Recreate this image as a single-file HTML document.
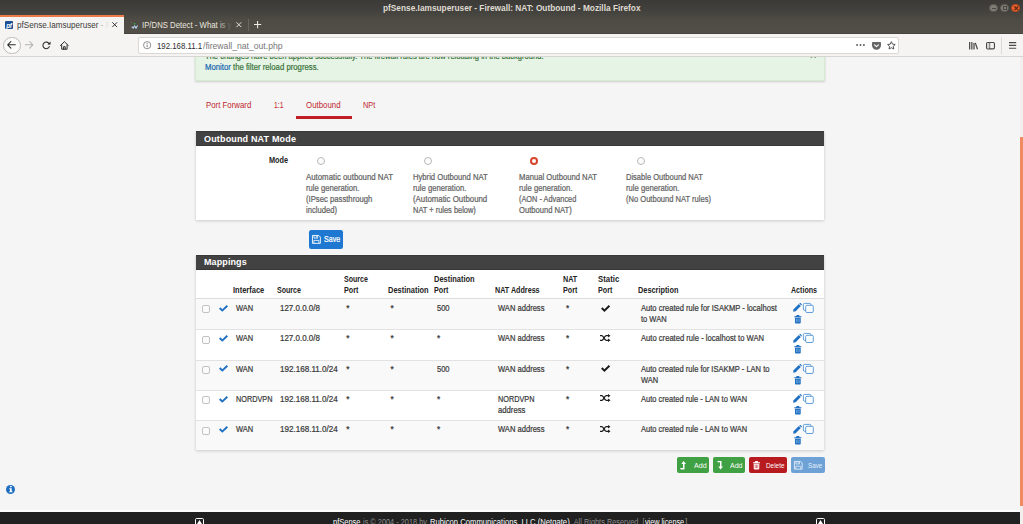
<!DOCTYPE html>
<html><head><meta charset="utf-8"><title>pfSense.Iamsuperuser - Firewall: NAT: Outbound</title>
<style>
*{box-sizing:border-box;margin:0;padding:0}
html,body{width:1023px;height:524px;overflow:hidden;background:#f5f5f5;font-family:"Liberation Sans",sans-serif}
body{position:relative}
.a,.t,svg{position:absolute}
.t{white-space:nowrap;line-height:12px;transform-origin:0 0}
svg{overflow:visible}
.phead{background:#424242;left:196px;width:628px;height:15px;border-top:1px solid #373737;border-bottom:1px solid #373737;box-shadow:0 -1px 0 rgba(255,255,255,.75)}
.panel{left:196px;width:628px;background:#fff;box-shadow:0 1px 3px rgba(0,0,0,.17),0 0 1px rgba(0,0,0,.08)}
.radio{width:8.2px;height:8.2px;border:1px solid #b9b9b9;border-radius:50%;background:#fbfbfb;top:157.3px}
.cb{width:8px;height:8px;border:1px solid #c2c2c2;border-radius:2px;background:#fbfbfb;left:201.8px}
.rl{left:196px;width:628px;height:1px;background:#e2e2e2}
.btn{height:16.6px;border-radius:2px;top:456.7px}
</style></head><body>
<!-- title bar -->
<div class="a" style="left:0;top:0;width:1023px;height:34px;background:linear-gradient(#3b3a36 0,#42403c 28%,#4d4b44 58%,#524f48 96%,#403e3a 100%)"></div>
<div class="a" style="left:989.4px;top:3.6px;width:8.7px;height:8.7px;border-radius:50%;background:#7f7c75;border:.6px solid #5e5b55"></div>
<div class="a" style="left:991.6px;top:7.6px;width:4.3px;height:1px;background:#4a4843"></div>
<div class="a" style="left:1000.4px;top:3.6px;width:8.7px;height:8.7px;border-radius:50%;background:#7f7c75;border:.6px solid #5e5b55"></div>
<div class="a" style="left:1002.7px;top:5.9px;width:4.2px;height:4.2px;border:.9px solid #4a4843"></div>
<div class="a" style="left:1011.4px;top:3.5px;width:8.9px;height:8.9px;border-radius:50%;background:#ea5f2b;border:.6px solid #b6491f"></div>
<svg style="left:1013.6px;top:5.7px" width="4.5" height="4.5" viewBox="0 0 4.5 4.5"><path d="M.4.4l3.7 3.7M4.1.4L.4 4.1" stroke="#4a2413" stroke-width="1.1"/></svg>
<!-- tabs -->
<div class="a" style="left:0;top:15.2px;width:124px;height:19px;background:#f5f4f2"></div>
<div class="a" style="left:0;top:15.2px;width:124px;height:1.4px;background:#eb7b4b"></div>
<div class="a" style="left:5.2px;top:21px;width:8.2px;height:8px;background:#1d4f96;border-radius:1px"></div>
<div class="t" style="left:6.2px;top:19.6px;font-size:6.4px;font-weight:bold;font-style:italic;color:#fff;letter-spacing:-.3px">pf</div>
<svg style="left:112px;top:22.2px" width="5.4" height="5.4" viewBox="0 0 5.4 5.4"><path d="M.3.3l4.8 4.8M5.1.3L.3 5.1" stroke="#2a2a2a" stroke-width=".95"/></svg>
<svg style="left:130.5px;top:22.3px" width="7.2" height="6.8" viewBox="0 0 7.2 6.8"><path d="M2.3 1.2h2.6L3.6 3z" fill="#35b04a"/><path d="M.7 4.6l1.4 1.6 1.5-2.3 1.4 2.2 1.6-2.6" fill="none" stroke="#b9d7f0" stroke-width="1.1"/><circle cx=".6" cy=".5" r=".35" fill="#ddd"/></svg>
<svg style="left:236px;top:22.2px" width="5.8" height="5.4" viewBox="0 0 5.8 5.4"><path d="M.5.3l4.8 4.8M5.3.3L.5 5.1" stroke="#ebe8e1" stroke-width=".95"/></svg>
<div class="a" style="left:247.8px;top:18.5px;width:1px;height:12.3px;background:#6a675f"></div>
<svg style="left:253.7px;top:20.8px" width="7.2" height="7.2" viewBox="0 0 7.2 7.2"><path d="M3.6 0v7.2M0 3.6h7.2" stroke="#efece6" stroke-width="1.05"/></svg>
<!-- tab text fades -->
<div class="a" style="left:97px;top:18px;width:14px;height:13px;background:linear-gradient(90deg,rgba(245,244,242,0),rgba(245,244,242,.75) 45%,#f5f4f2 95%);z-index:3"></div>
<div class="a" style="left:217px;top:18px;width:17px;height:13px;background:linear-gradient(90deg,rgba(75,73,67,0),#4d4b44 90%);z-index:3"></div>
<!-- toolbar -->
<div class="a" style="left:0;top:33.6px;width:1023px;height:23.7px;background:#f5f4f2;border-bottom:1px solid #d6d5d2;z-index:2"></div>
<div class="a" style="left:138.4px;top:36.8px;width:761px;height:17.6px;background:#fff;border:.8px solid #d9d8d5;border-radius:2px;z-index:2"></div>
<div class="a" style="left:3px;top:36.5px;width:17.6px;height:17.6px;border-radius:50%;background:#fbfbfa;border:.8px solid #bdbbb6;z-index:2"></div>
<svg style="left:7.4px;top:41.4px;z-index:2" width="8.6" height="7.6" viewBox="0 0 8.6 7.6"><path d="M3.9.5L.7 3.8l3.2 3.3M.9 3.8h7.4" fill="none" stroke="#2b2b2b" stroke-width="1.05" stroke-linecap="round" stroke-linejoin="round"/></svg>
<svg style="left:25px;top:41.4px;z-index:2" width="8.6" height="7.6" viewBox="0 0 8.6 7.6"><path d="M4.7.5l3.2 3.3-3.2 3.3M7.7 3.8H.3" fill="none" stroke="#b4b3b0" stroke-width="1.05" stroke-linecap="round" stroke-linejoin="round"/></svg>
<svg style="left:42.3px;top:41.2px;z-index:2" width="9.6" height="8.2" viewBox="0 0 9.6 8.2"><path d="M7.2 2.9A3.3 3.3 0 1 0 7.3 5.6" fill="none" stroke="#2b2b2b" stroke-width="1.05" stroke-linecap="round"/><path d="M8.6.6v3h-3z" fill="#2b2b2b"/></svg>
<svg style="left:60.1px;top:41.1px;z-index:2" width="8.8" height="8.8" viewBox="0 0 8.8 8.8"><path d="M.5 4.5L4.4.7l3.9 3.8M1.7 4.2v4h5.4v-4M3.6 8.2V5.7h1.6v2.5" fill="none" stroke="#2b2b2b" stroke-width="1" stroke-linecap="round" stroke-linejoin="round"/></svg>
<svg style="left:143.1px;top:41.2px;z-index:2" width="8.3" height="8.3" viewBox="0 0 7 7"><circle cx="3.5" cy="3.5" r="3.05" fill="none" stroke="#7a7a7a" stroke-width=".7"/><path d="M3.5 3.1v2.1" stroke="#7a7a7a" stroke-width=".8"/><circle cx="3.5" cy="2" r=".5" fill="#7a7a7a"/></svg>
<svg style="left:856px;top:44.2px;z-index:2" width="9" height="2" viewBox="0 0 9 2"><circle cx="1.1" cy="1" r=".95" fill="#5b5b5b"/><circle cx="4.5" cy="1" r=".95" fill="#5b5b5b"/><circle cx="7.9" cy="1" r=".95" fill="#5b5b5b"/></svg>
<svg style="left:871.8px;top:41.5px;z-index:2" width="9" height="7.8" viewBox="0 0 9 7.8"><path d="M.9 0h7.2q.9 0 .9.9v2.4a4.5 4.5 0 0 1-9 0V.9Q0 0 .9 0z" fill="#666"/><path d="M2.5 2.8l2 1.9 2-1.9" fill="none" stroke="#fff" stroke-width="1.1" stroke-linecap="round" stroke-linejoin="round"/></svg>
<svg style="left:887.3px;top:41px;z-index:2" width="8.8" height="8.6" viewBox="0 0 8.8 8.6"><path d="M4.4.7l1.15 2.45 2.65.35-1.95 1.85.5 2.65L4.4 6.7 2.05 8l.5-2.65L.6 3.5l2.65-.35z" fill="none" stroke="#4a4a4a" stroke-width=".95" stroke-linejoin="round"/></svg>
<svg style="left:969px;top:41.5px;z-index:2" width="9" height="7.4" viewBox="0 0 9 7.4"><path d="M.65 0v7.4M2.85 0v7.4M5 1v6.4M6.3.9l2.2 6.3" fill="none" stroke="#4a4a4a" stroke-width="1.25"/></svg>
<svg style="left:986.3px;top:41.5px;z-index:2" width="9" height="7.4" viewBox="0 0 9 7.4"><rect x=".55" y=".55" width="7.9" height="6.3" rx="1.1" fill="none" stroke="#4a4a4a" stroke-width="1.15"/><path d="M3.7.5v6.4" stroke="#4a4a4a" stroke-width="1"/><rect x="1.1" y="1.1" width="2.2" height="5.2" fill="#d2d2d2"/></svg>
<div class="a" style="left:1001.2px;top:36.7px;width:1px;height:17px;background:#dcdad6;z-index:2"></div>
<svg style="left:1009px;top:42px;z-index:2" width="7.2" height="6.8" viewBox="0 0 7.2 6.8"><path d="M0 .6h7.2M0 3.4h7.2M0 6.2h7.2" stroke="#4a4a4a" stroke-width="1.1"/></svg>
<!-- alert -->
<div class="a" style="left:195.4px;top:40px;width:629.2px;height:40.8px;background:#e6f4e5;border:.6px solid #d5ead0;box-shadow:0 1px 2px rgba(0,0,0,.16)"></div>
<div class="t" style="left:810px;top:48.7px;font-size:11px;color:#5f7f60;font-weight:bold;z-index:1">×</div>
<!-- nav tabs -->
<div class="a" style="left:295.8px;top:116.3px;width:56px;height:3px;background:#bf1e25"></div>
<!-- panel 1 -->
<div class="a panel" style="top:131px;height:89.3px"></div>
<div class="a phead" style="top:131px"></div>
<div class="a radio" style="left:317.3px"></div>
<div class="a radio" style="left:423.7px"></div>
<div class="a radio" style="left:530.3px;border:2.9px solid #d8442c;background:#fff"></div>
<div class="a radio" style="left:636.8px"></div>
<div class="a" style="left:308.8px;top:230.2px;width:34px;height:18.8px;background:#1e77d0;border-radius:2.2px"></div>
<svg style="left:311.5px;top:235px" width="8.8" height="8.8" viewBox="0 0 8.8 8.8"><path d="M.45.45h6.3l1.6 1.6v6.3H.45z" fill="none" stroke="#fff" stroke-width=".9" stroke-linejoin="round"/><path d="M2 .6v2.5h3.6V.6M4.3 1v1.5" fill="none" stroke="#fff" stroke-width=".8"/><path d="M1.9 8.2V5.4h5v2.8" fill="none" stroke="#fff" stroke-width=".8"/></svg>
<!-- panel 2 -->
<div class="a panel" style="top:255.3px;height:195.2px"></div>
<div class="a phead" style="top:255.3px;height:14.6px"></div>
<div class="a" style="left:196px;top:297.6px;width:628px;height:1.4px;background:#dcdcdc"></div>
<div class="a" style="left:196px;top:299.0px;width:628px;height:30.3px;background:#f9f9f9"></div>
<div class="a cb" style="top:305.3px"></div>
<svg style="left:218.6px;top:304.8px" width="9" height="6.9" viewBox="0 0 9.2 7"><path d="M0 3.8L1.4 2.4l2 2L7.8 0l1.4 1.4L3.4 7z" fill="#1f6fc2"/></svg>
<svg style="left:601px;top:304.5px" width="9.2" height="6.9" viewBox="0 0 9.2 7"><path d="M0 3.8L1.4 2.4l2 2L7.8 0l1.4 1.4L3.4 7z" fill="#1c1c1c"/></svg>
<svg style="left:793px;top:303.4px" width="8.9" height="8.7" viewBox="0 0 9 9"><path d="M0 9l.5-2.6L5.9 1 8 3.100 2.600 8.500z" fill="#1f6fc2"/><path d="M6.500.400l.4-.3q.4-.3.800 0l1.200 1.200q.300.400 0 .800l-.4.400z" fill="#1f6fc2"/></svg>
<svg style="left:803.2px;top:303.0px" width="10.7" height="9.9" viewBox="0 0 10.7 9.900"><rect x=".4" y=".4" width="7.500" height="6.900" rx="1.200" fill="#fbfdff" stroke="#3b86d0" stroke-width=".8"/><rect x="2.700" y="2.300" width="7.600" height="7.200" rx="1.200" fill="#fbfdff" stroke="#3b86d0" stroke-width=".8"/></svg>
<svg style="left:793.6px;top:315.0px" width="7.700" height="8.600" viewBox="0 0 7 8.400"><path d="M0 1.200h7v1H0zM2.300 0h2.400l.5 1.200H1.800zM.7 2.700h5.600v4.900q0 .8-.8.800h-4q-.8 0-.8-.8z" fill="#1f6fc2"/><path d="M2.200 3.600v3.400M3.500 3.600v3.400M4.800 3.600v3.400" stroke="#9cc3ea" stroke-width=".5"/></svg>
<div class="a rl" style="top:329.2px"></div>
<div class="a cb" style="top:335.6px"></div>
<svg style="left:218.6px;top:335.1px" width="9" height="6.9" viewBox="0 0 9.2 7"><path d="M0 3.8L1.4 2.4l2 2L7.8 0l1.4 1.4L3.4 7z" fill="#1f6fc2"/></svg>
<svg style="left:600.3px;top:333.7px" width="10.5" height="8" viewBox="0 0 10.5 8"><path d="M0 1.7h1.9c1.7 0 2.4 4.6 4.3 4.6h2M0 6.3h1.9c1.7 0 2.4-4.6 4.3-4.6h2" fill="none" stroke="#1c1c1c" stroke-width="1.3"/><path d="M8 0l2.5 1.7L8 3.4zM8 4.6l2.5 1.7L8 8z" fill="#1c1c1c"/></svg>
<svg style="left:793px;top:333.7px" width="8.9" height="8.7" viewBox="0 0 9 9"><path d="M0 9l.5-2.6L5.9 1 8 3.100 2.600 8.500z" fill="#1f6fc2"/><path d="M6.500.400l.4-.3q.4-.3.800 0l1.200 1.200q.300.400 0 .800l-.4.400z" fill="#1f6fc2"/></svg>
<svg style="left:803.2px;top:333.3px" width="10.7" height="9.9" viewBox="0 0 10.7 9.900"><rect x=".4" y=".4" width="7.500" height="6.900" rx="1.200" fill="#fbfdff" stroke="#3b86d0" stroke-width=".8"/><rect x="2.700" y="2.300" width="7.600" height="7.200" rx="1.200" fill="#fbfdff" stroke="#3b86d0" stroke-width=".8"/></svg>
<svg style="left:793.6px;top:345.3px" width="7.700" height="8.600" viewBox="0 0 7 8.400"><path d="M0 1.200h7v1H0zM2.300 0h2.400l.5 1.200H1.800zM.7 2.700h5.600v4.900q0 .8-.8.800h-4q-.8 0-.8-.8z" fill="#1f6fc2"/><path d="M2.200 3.600v3.400M3.500 3.600v3.400M4.800 3.600v3.400" stroke="#9cc3ea" stroke-width=".5"/></svg>
<div class="a" style="left:196px;top:359.6px;width:628px;height:30.3px;background:#f9f9f9"></div>
<div class="a rl" style="top:359.5px"></div>
<div class="a cb" style="top:365.9px"></div>
<svg style="left:218.6px;top:365.4px" width="9" height="6.9" viewBox="0 0 9.2 7"><path d="M0 3.8L1.4 2.4l2 2L7.8 0l1.4 1.4L3.4 7z" fill="#1f6fc2"/></svg>
<svg style="left:601px;top:365.1px" width="9.2" height="6.9" viewBox="0 0 9.2 7"><path d="M0 3.8L1.4 2.4l2 2L7.8 0l1.4 1.4L3.4 7z" fill="#1c1c1c"/></svg>
<svg style="left:793px;top:364.0px" width="8.9" height="8.7" viewBox="0 0 9 9"><path d="M0 9l.5-2.6L5.9 1 8 3.100 2.600 8.500z" fill="#1f6fc2"/><path d="M6.500.400l.4-.3q.4-.3.800 0l1.200 1.200q.300.400 0 .800l-.4.400z" fill="#1f6fc2"/></svg>
<svg style="left:803.2px;top:363.6px" width="10.7" height="9.9" viewBox="0 0 10.7 9.900"><rect x=".4" y=".4" width="7.500" height="6.900" rx="1.200" fill="#fbfdff" stroke="#3b86d0" stroke-width=".8"/><rect x="2.700" y="2.300" width="7.600" height="7.200" rx="1.200" fill="#fbfdff" stroke="#3b86d0" stroke-width=".8"/></svg>
<svg style="left:793.6px;top:375.6px" width="7.700" height="8.600" viewBox="0 0 7 8.400"><path d="M0 1.200h7v1H0zM2.300 0h2.400l.5 1.200H1.800zM.7 2.700h5.600v4.900q0 .8-.8.800h-4q-.8 0-.8-.8z" fill="#1f6fc2"/><path d="M2.200 3.600v3.400M3.500 3.600v3.400M4.800 3.600v3.400" stroke="#9cc3ea" stroke-width=".5"/></svg>
<div class="a rl" style="top:389.8px"></div>
<div class="a cb" style="top:396.2px"></div>
<svg style="left:218.6px;top:395.7px" width="9" height="6.9" viewBox="0 0 9.2 7"><path d="M0 3.8L1.4 2.4l2 2L7.8 0l1.4 1.4L3.4 7z" fill="#1f6fc2"/></svg>
<svg style="left:600.3px;top:394.3px" width="10.5" height="8" viewBox="0 0 10.5 8"><path d="M0 1.7h1.9c1.7 0 2.4 4.6 4.3 4.6h2M0 6.3h1.9c1.7 0 2.4-4.6 4.3-4.6h2" fill="none" stroke="#1c1c1c" stroke-width="1.3"/><path d="M8 0l2.5 1.7L8 3.4zM8 4.6l2.5 1.7L8 8z" fill="#1c1c1c"/></svg>
<svg style="left:793px;top:394.3px" width="8.9" height="8.7" viewBox="0 0 9 9"><path d="M0 9l.5-2.6L5.9 1 8 3.100 2.600 8.500z" fill="#1f6fc2"/><path d="M6.500.400l.4-.3q.4-.3.800 0l1.200 1.200q.300.400 0 .800l-.4.400z" fill="#1f6fc2"/></svg>
<svg style="left:803.2px;top:393.9px" width="10.7" height="9.9" viewBox="0 0 10.7 9.900"><rect x=".4" y=".4" width="7.500" height="6.900" rx="1.200" fill="#fbfdff" stroke="#3b86d0" stroke-width=".8"/><rect x="2.700" y="2.300" width="7.600" height="7.200" rx="1.200" fill="#fbfdff" stroke="#3b86d0" stroke-width=".8"/></svg>
<svg style="left:793.6px;top:405.9px" width="7.700" height="8.600" viewBox="0 0 7 8.400"><path d="M0 1.200h7v1H0zM2.300 0h2.400l.5 1.200H1.800zM.7 2.700h5.600v4.900q0 .8-.8.800h-4q-.8 0-.8-.8z" fill="#1f6fc2"/><path d="M2.200 3.600v3.400M3.500 3.600v3.400M4.800 3.600v3.400" stroke="#9cc3ea" stroke-width=".5"/></svg>
<div class="a" style="left:196px;top:420.2px;width:628px;height:30.3px;background:#f9f9f9"></div>
<div class="a rl" style="top:420.1px"></div>
<div class="a cb" style="top:426.5px"></div>
<svg style="left:218.6px;top:426.0px" width="9" height="6.9" viewBox="0 0 9.2 7"><path d="M0 3.8L1.4 2.4l2 2L7.8 0l1.4 1.4L3.4 7z" fill="#1f6fc2"/></svg>
<svg style="left:600.3px;top:424.6px" width="10.5" height="8" viewBox="0 0 10.5 8"><path d="M0 1.7h1.9c1.7 0 2.4 4.6 4.3 4.6h2M0 6.3h1.9c1.7 0 2.4-4.6 4.3-4.6h2" fill="none" stroke="#1c1c1c" stroke-width="1.3"/><path d="M8 0l2.5 1.7L8 3.4zM8 4.6l2.5 1.7L8 8z" fill="#1c1c1c"/></svg>
<svg style="left:793px;top:424.6px" width="8.9" height="8.7" viewBox="0 0 9 9"><path d="M0 9l.5-2.6L5.9 1 8 3.100 2.600 8.500z" fill="#1f6fc2"/><path d="M6.500.400l.4-.3q.4-.3.800 0l1.200 1.200q.300.400 0 .800l-.4.400z" fill="#1f6fc2"/></svg>
<svg style="left:803.2px;top:424.2px" width="10.7" height="9.9" viewBox="0 0 10.7 9.900"><rect x=".4" y=".4" width="7.500" height="6.900" rx="1.200" fill="#fbfdff" stroke="#3b86d0" stroke-width=".8"/><rect x="2.700" y="2.300" width="7.600" height="7.200" rx="1.200" fill="#fbfdff" stroke="#3b86d0" stroke-width=".8"/></svg>
<svg style="left:793.6px;top:436.2px" width="7.700" height="8.600" viewBox="0 0 7 8.400"><path d="M0 1.200h7v1H0zM2.300 0h2.400l.5 1.200H1.800zM.7 2.700h5.600v4.900q0 .8-.8.800h-4q-.8 0-.8-.8z" fill="#1f6fc2"/><path d="M2.200 3.600v3.400M3.500 3.600v3.400M4.800 3.600v3.400" stroke="#9cc3ea" stroke-width=".5"/></svg>
<!-- buttons -->
<div class="a btn" style="left:677.4px;width:31.4px;background:#40a044"></div>
<div class="a btn" style="left:713.3px;width:31.5px;background:#40a044"></div>
<div class="a btn" style="left:749.3px;width:37.6px;background:#b71b1f"></div>
<div class="a btn" style="left:791.3px;width:33.6px;background:#6ea2d6"></div>
<svg style="left:680.2px;top:461px" width="6" height="8.4" viewBox="0 0 6 8.4"><path d="M3.6 0L6 3H4.5v5.4H.9L0 7.1h3V3H1.3z" fill="#fff"/></svg>
<svg style="left:716.5px;top:461px" width="6" height="8.4" viewBox="0 0 6 8.4"><path d="M3.6 8.4L6 5.4H4.5V0H.9L0 1.3h3v4.1H1.3z" fill="#fff"/></svg>
<svg style="left:752.5px;top:461px" width="7" height="8.4" viewBox="0 0 7 8.4"><path d="M0 1.2h7v1H0zM2.3 0h2.4l.5 1.2H1.8zM.7 2.7h5.6v4.9q0 .8-.8.8h-4q-.8 0-.8-.8z" fill="#fff"/><path d="M2.2 3.6v3.6M3.5 3.6v3.6M4.8 3.6v3.6" stroke="#b71b1f" stroke-width=".55"/></svg>
<svg style="left:794.4px;top:461px" width="8.6" height="8.6" viewBox="0 0 8.8 8.8"><path d="M.45.45h6.3l1.6 1.6v6.3H.45z" fill="none" stroke="#e4eef8" stroke-width=".9" stroke-linejoin="round"/><path d="M2 .6v2.5h3.6V.6M4.3 1v1.5" fill="none" stroke="#e4eef8" stroke-width=".8"/><path d="M1.9 8.2V5.4h5v2.8" fill="none" stroke="#e4eef8" stroke-width=".8"/></svg>
<!-- info icon -->
<div class="a" style="left:5.55px;top:484.5px;width:9.9px;height:9.9px;border-radius:50%;background:#1f6fc0"></div>
<svg style="left:8.7px;top:486.2px" width="3.6" height="6.4" viewBox="0 0 3.6 6.4"><path d="M1 0h1.7v1.3H1zM.3 2.3h2.4v3h.7v1H.2v-1h.8V3.3H.3z" fill="#fff"/></svg>
<!-- footer -->
<div class="a" style="left:0;top:509.6px;width:1020px;height:2.6px;background:#fdfdfd"></div>
<div class="a" style="left:0;top:512px;width:1020px;height:12px;background:#212121"></div>
<div class="a" style="left:195.3px;top:518px;width:9px;height:9px;border:1.1px solid #fff;border-radius:1.6px"></div>
<svg style="left:197.3px;top:520.1px" width="5" height="3.9" viewBox="0 0 4.4 3.4"><path d="M2.2 0l2.2 3.4H0z" fill="#fff"/></svg>
<div class="a" style="left:816.3px;top:518px;width:9px;height:9px;border:1.1px solid #fff;border-radius:1.6px"></div>
<svg style="left:818.3px;top:520.1px" width="5" height="3.9" viewBox="0 0 4.4 3.4"><path d="M2.2 0l2.2 3.4H0z" fill="#fff"/></svg>
<!-- scrollbar -->
<div class="a" style="left:1019.8px;top:57px;width:3.2px;height:467px;background:#f1f0ef"></div>
<div class="a" style="left:1020.3px;top:137.2px;width:2.7px;height:368.8px;background:#f08a60"></div>
<div class="t" style="left:383.00px;top:2.12px;font-size:8.3px;color:#dfdbd2;font-weight:bold;">pfSense.Iamsuperuser - Firewall: NAT: Outbound - Mozilla Firefox</div>
<div class="t" style="left:17.10px;top:18.82px;font-size:8.6px;color:#3a3a3a;transform:scaleX(0.9434);">pfSense.Iamsuperuser - F</div>
<div class="t" style="left:141.50px;top:18.72px;font-size:8.6px;color:#e9e6df;transform:scaleX(0.9061);">IP/DNS Detect - What is y</div>
<div class="t" style="left:157.30px;top:39.62px;font-size:8.9px;color:#2e2e2e;transform:scaleX(0.8824);z-index:4;">192.168.11.1</div>
<div class="t" style="left:203.20px;top:39.62px;font-size:8.9px;color:#777;transform:scaleX(0.9711);z-index:4;">/firewall_nat_out.php</div>
<div class="t" style="left:204.60px;top:49.72px;font-size:8.3px;color:#3c763d;transform:scaleX(0.9137);-webkit-text-stroke:.22px;z-index:1;">The changes have been applied successfully. The firewall rules are now reloading in the background.</div>
<div class="t" style="left:204.60px;top:60.52px;font-size:8.3px;color:#3c763d;transform:scaleX(0.9338);-webkit-text-stroke:.22px;"><span style="color:#2068b4">Monitor</span> the filter reload progress.</div>
<div class="t" style="left:205.50px;top:99.35px;font-size:8.8px;color:#c0272d;transform:scaleX(0.8911);">Port Forward</div>
<div class="t" style="left:273.90px;top:99.35px;font-size:8.8px;color:#c0272d;transform:scaleX(0.7782);">1:1</div>
<div class="t" style="left:306.30px;top:99.35px;font-size:8.8px;color:#c0272d;transform:scaleX(0.8955);">Outbound</div>
<div class="t" style="left:363.30px;top:99.35px;font-size:8.8px;color:#c0272d;transform:scaleX(0.8344);">NPt</div>
<div class="t" style="left:204.20px;top:132.80px;font-size:9.8px;color:#fff;font-weight:bold;transform:scaleX(0.9200);letter-spacing:0.167px;">Outbound NAT Mode</div>
<div class="t" style="left:269.10px;top:154.12px;font-size:8.3px;color:#222;font-weight:bold;transform:scaleX(0.8799);">Mode</div>
<div class="t" style="left:306.10px;top:170.52px;font-size:8.3px;color:#636363;transform:scaleX(0.9444);-webkit-text-stroke:.22px;">Automatic outbound NAT</div>
<div class="t" style="left:306.10px;top:181.62px;font-size:8.3px;color:#636363;transform:scaleX(0.9259);-webkit-text-stroke:.22px;">rule generation.</div>
<div class="t" style="left:306.10px;top:192.72px;font-size:8.3px;color:#636363;transform:scaleX(0.9281);-webkit-text-stroke:.22px;">(IPsec passthrough</div>
<div class="t" style="left:306.10px;top:203.82px;font-size:8.3px;color:#636363;transform:scaleX(0.9202);-webkit-text-stroke:.22px;">included)</div>
<div class="t" style="left:412.50px;top:170.52px;font-size:8.3px;color:#636363;transform:scaleX(0.9217);-webkit-text-stroke:.22px;">Hybrid Outbound NAT</div>
<div class="t" style="left:412.50px;top:181.62px;font-size:8.3px;color:#636363;transform:scaleX(0.9259);-webkit-text-stroke:.22px;">rule generation.</div>
<div class="t" style="left:412.50px;top:192.72px;font-size:8.3px;color:#636363;transform:scaleX(0.9468);-webkit-text-stroke:.22px;">(Automatic Outbound</div>
<div class="t" style="left:412.50px;top:203.82px;font-size:8.3px;color:#636363;transform:scaleX(0.8977);-webkit-text-stroke:.22px;">NAT + rules below)</div>
<div class="t" style="left:519.00px;top:170.52px;font-size:8.3px;color:#636363;transform:scaleX(0.9242);-webkit-text-stroke:.22px;">Manual Outbound NAT</div>
<div class="t" style="left:519.00px;top:181.62px;font-size:8.3px;color:#636363;transform:scaleX(0.9259);-webkit-text-stroke:.22px;">rule generation.</div>
<div class="t" style="left:519.00px;top:192.72px;font-size:8.3px;color:#636363;transform:scaleX(0.8868);-webkit-text-stroke:.22px;">(AON - Advanced</div>
<div class="t" style="left:519.00px;top:203.82px;font-size:8.3px;color:#636363;transform:scaleX(0.9181);-webkit-text-stroke:.22px;">Outbound NAT)</div>
<div class="t" style="left:625.70px;top:170.52px;font-size:8.3px;color:#636363;transform:scaleX(0.9074);-webkit-text-stroke:.22px;">Disable Outbound NAT</div>
<div class="t" style="left:625.70px;top:181.62px;font-size:8.3px;color:#636363;transform:scaleX(0.9259);-webkit-text-stroke:.22px;">rule generation.</div>
<div class="t" style="left:625.70px;top:192.72px;font-size:8.3px;color:#636363;transform:scaleX(0.9104);-webkit-text-stroke:.22px;">(No Outbound NAT rules)</div>
<div class="t" style="left:323.90px;top:233.12px;font-size:8.3px;color:#fff;transform:scaleX(0.8499);-webkit-text-stroke:.22px;">Save</div>
<div class="t" style="left:204.40px;top:256.10px;font-size:9.8px;color:#fff;font-weight:bold;transform:scaleX(0.9200);letter-spacing:0.098px;">Mappings</div>
<div class="t" style="left:233.00px;top:283.72px;font-size:8.3px;color:#222;font-weight:bold;transform:scaleX(0.9036);">Interface</div>
<div class="t" style="left:277.10px;top:283.72px;font-size:8.3px;color:#222;font-weight:bold;transform:scaleX(0.8522);">Source</div>
<div class="t" style="left:343.50px;top:272.72px;font-size:8.3px;color:#222;font-weight:bold;transform:scaleX(0.8522);">Source</div>
<div class="t" style="left:343.50px;top:283.72px;font-size:8.3px;color:#222;font-weight:bold;transform:scaleX(0.8675);">Port</div>
<div class="t" style="left:387.50px;top:283.72px;font-size:8.3px;color:#222;font-weight:bold;transform:scaleX(0.8979);">Destination</div>
<div class="t" style="left:433.80px;top:272.72px;font-size:8.3px;color:#222;font-weight:bold;transform:scaleX(0.9001);">Destination</div>
<div class="t" style="left:433.80px;top:283.72px;font-size:8.3px;color:#222;font-weight:bold;transform:scaleX(0.8675);">Port</div>
<div class="t" style="left:494.60px;top:283.72px;font-size:8.3px;color:#222;font-weight:bold;transform:scaleX(0.8638);">NAT Address</div>
<div class="t" style="left:563.20px;top:272.72px;font-size:8.3px;color:#222;font-weight:bold;transform:scaleX(0.8676);">NAT</div>
<div class="t" style="left:563.20px;top:283.72px;font-size:8.3px;color:#222;font-weight:bold;transform:scaleX(0.8675);">Port</div>
<div class="t" style="left:597.70px;top:272.72px;font-size:8.3px;color:#222;font-weight:bold;transform:scaleX(0.9400);">Static</div>
<div class="t" style="left:597.70px;top:283.72px;font-size:8.3px;color:#222;font-weight:bold;transform:scaleX(0.8675);">Port</div>
<div class="t" style="left:638.10px;top:283.72px;font-size:8.3px;color:#222;font-weight:bold;transform:scaleX(0.8843);">Description</div>
<div class="t" style="left:790.80px;top:283.72px;font-size:8.3px;color:#222;font-weight:bold;transform:scaleX(0.8536);">Actions</div>
<div class="t" style="left:235.80px;top:302.02px;font-size:8.3px;color:#3a3a3a;transform:scaleX(0.9026);-webkit-text-stroke:.22px;">WAN</div>
<div class="t" style="left:280.30px;top:302.02px;font-size:8.3px;color:#3a3a3a;transform:scaleX(0.9593);-webkit-text-stroke:.22px;">127.0.0.0/8</div>
<div class="t" style="left:346.30px;top:302.02px;font-size:8.3px;color:#3a3a3a;-webkit-text-stroke:.22px;">*</div>
<div class="t" style="left:390.40px;top:302.02px;font-size:8.3px;color:#3a3a3a;-webkit-text-stroke:.22px;">*</div>
<div class="t" style="left:437.00px;top:302.02px;font-size:8.3px;color:#3a3a3a;transform:scaleX(0.9066);-webkit-text-stroke:.22px;">500</div>
<div class="t" style="left:497.60px;top:302.02px;font-size:8.3px;color:#3a3a3a;transform:scaleX(0.9128);-webkit-text-stroke:.22px;">WAN address</div>
<div class="t" style="left:566.00px;top:302.02px;font-size:8.3px;color:#3a3a3a;-webkit-text-stroke:.22px;">*</div>
<div class="t" style="left:641.10px;top:302.02px;font-size:8.3px;color:#3a3a3a;transform:scaleX(0.9128);-webkit-text-stroke:.22px;">Auto created rule for ISAKMP - localhost</div>
<div class="t" style="left:641.10px;top:313.12px;font-size:8.3px;color:#3a3a3a;transform:scaleX(0.9052);-webkit-text-stroke:.22px;">to WAN</div>
<div class="t" style="left:235.80px;top:332.32px;font-size:8.3px;color:#3a3a3a;transform:scaleX(0.9026);-webkit-text-stroke:.22px;">WAN</div>
<div class="t" style="left:280.30px;top:332.32px;font-size:8.3px;color:#3a3a3a;transform:scaleX(0.9593);-webkit-text-stroke:.22px;">127.0.0.0/8</div>
<div class="t" style="left:346.30px;top:332.32px;font-size:8.3px;color:#3a3a3a;-webkit-text-stroke:.22px;">*</div>
<div class="t" style="left:390.40px;top:332.32px;font-size:8.3px;color:#3a3a3a;-webkit-text-stroke:.22px;">*</div>
<div class="t" style="left:437.00px;top:332.32px;font-size:8.3px;color:#3a3a3a;-webkit-text-stroke:.22px;">*</div>
<div class="t" style="left:497.60px;top:332.32px;font-size:8.3px;color:#3a3a3a;transform:scaleX(0.9128);-webkit-text-stroke:.22px;">WAN address</div>
<div class="t" style="left:566.00px;top:332.32px;font-size:8.3px;color:#3a3a3a;-webkit-text-stroke:.22px;">*</div>
<div class="t" style="left:641.10px;top:332.32px;font-size:8.3px;color:#3a3a3a;transform:scaleX(0.9186);-webkit-text-stroke:.22px;">Auto created rule - localhost to WAN</div>
<div class="t" style="left:235.80px;top:362.62px;font-size:8.3px;color:#3a3a3a;transform:scaleX(0.9026);-webkit-text-stroke:.22px;">WAN</div>
<div class="t" style="left:280.30px;top:362.62px;font-size:8.3px;color:#3a3a3a;transform:scaleX(0.9724);-webkit-text-stroke:.22px;">192.168.11.0/24</div>
<div class="t" style="left:346.30px;top:362.62px;font-size:8.3px;color:#3a3a3a;-webkit-text-stroke:.22px;">*</div>
<div class="t" style="left:390.40px;top:362.62px;font-size:8.3px;color:#3a3a3a;-webkit-text-stroke:.22px;">*</div>
<div class="t" style="left:437.00px;top:362.62px;font-size:8.3px;color:#3a3a3a;transform:scaleX(0.9066);-webkit-text-stroke:.22px;">500</div>
<div class="t" style="left:497.60px;top:362.62px;font-size:8.3px;color:#3a3a3a;transform:scaleX(0.9128);-webkit-text-stroke:.22px;">WAN address</div>
<div class="t" style="left:566.00px;top:362.62px;font-size:8.3px;color:#3a3a3a;-webkit-text-stroke:.22px;">*</div>
<div class="t" style="left:641.10px;top:362.62px;font-size:8.3px;color:#3a3a3a;transform:scaleX(0.9080);-webkit-text-stroke:.22px;">Auto created rule for ISAKMP - LAN to</div>
<div class="t" style="left:641.10px;top:373.72px;font-size:8.3px;color:#3a3a3a;transform:scaleX(0.9026);-webkit-text-stroke:.22px;">WAN</div>
<div class="t" style="left:235.80px;top:392.92px;font-size:8.3px;color:#3a3a3a;transform:scaleX(0.8772);-webkit-text-stroke:.22px;">NORDVPN</div>
<div class="t" style="left:280.30px;top:392.92px;font-size:8.3px;color:#3a3a3a;transform:scaleX(0.9724);-webkit-text-stroke:.22px;">192.168.11.0/24</div>
<div class="t" style="left:346.30px;top:392.92px;font-size:8.3px;color:#3a3a3a;-webkit-text-stroke:.22px;">*</div>
<div class="t" style="left:390.40px;top:392.92px;font-size:8.3px;color:#3a3a3a;-webkit-text-stroke:.22px;">*</div>
<div class="t" style="left:437.00px;top:392.92px;font-size:8.3px;color:#3a3a3a;-webkit-text-stroke:.22px;">*</div>
<div class="t" style="left:497.60px;top:392.92px;font-size:8.3px;color:#3a3a3a;transform:scaleX(0.8772);-webkit-text-stroke:.22px;">NORDVPN</div>
<div class="t" style="left:497.60px;top:404.02px;font-size:8.3px;color:#3a3a3a;transform:scaleX(0.9262);-webkit-text-stroke:.22px;">address</div>
<div class="t" style="left:566.00px;top:392.92px;font-size:8.3px;color:#3a3a3a;-webkit-text-stroke:.22px;">*</div>
<div class="t" style="left:641.10px;top:392.92px;font-size:8.3px;color:#3a3a3a;transform:scaleX(0.9055);-webkit-text-stroke:.22px;">Auto created rule - LAN to WAN</div>
<div class="t" style="left:235.80px;top:423.22px;font-size:8.3px;color:#3a3a3a;transform:scaleX(0.9026);-webkit-text-stroke:.22px;">WAN</div>
<div class="t" style="left:280.30px;top:423.22px;font-size:8.3px;color:#3a3a3a;transform:scaleX(0.9724);-webkit-text-stroke:.22px;">192.168.11.0/24</div>
<div class="t" style="left:346.30px;top:423.22px;font-size:8.3px;color:#3a3a3a;-webkit-text-stroke:.22px;">*</div>
<div class="t" style="left:390.40px;top:423.22px;font-size:8.3px;color:#3a3a3a;-webkit-text-stroke:.22px;">*</div>
<div class="t" style="left:437.00px;top:423.22px;font-size:8.3px;color:#3a3a3a;-webkit-text-stroke:.22px;">*</div>
<div class="t" style="left:497.60px;top:423.22px;font-size:8.3px;color:#3a3a3a;transform:scaleX(0.9128);-webkit-text-stroke:.22px;">WAN address</div>
<div class="t" style="left:566.00px;top:423.22px;font-size:8.3px;color:#3a3a3a;-webkit-text-stroke:.22px;">*</div>
<div class="t" style="left:641.10px;top:423.22px;font-size:8.3px;color:#3a3a3a;transform:scaleX(0.9055);-webkit-text-stroke:.22px;">Auto created rule - LAN to WAN</div>
<div class="t" style="left:693.90px;top:459.57px;font-size:7.6px;color:#fff;transform:scaleX(0.9332);">Add</div>
<div class="t" style="left:730.30px;top:459.57px;font-size:7.6px;color:#fff;transform:scaleX(0.9181);">Add</div>
<div class="t" style="left:765.90px;top:459.57px;font-size:7.6px;color:#fff;transform:scaleX(0.8423);">Delete</div>
<div class="t" style="left:808.00px;top:459.57px;font-size:7.6px;color:#e4eef8;transform:scaleX(0.8253);">Save</div>
<div class="t" style="left:332.70px;top:516.12px;font-size:8.3px;color:#fff;transform:scaleX(0.9017);">pfSense</div>
<div class="t" style="left:362.60px;top:516.12px;font-size:8.3px;color:#8d8d8d;transform:scaleX(0.8872);">is © 2004 - 2018 by</div>
<div class="t" style="left:429.50px;top:516.12px;font-size:8.3px;color:#fff;transform:scaleX(0.9235);">Rubicon Communications, LLC (Netgate)</div>
<div class="t" style="left:569.60px;top:516.12px;font-size:8.3px;color:#8d8d8d;transform:scaleX(0.8886);">. All Rights Reserved. [</div>
<div class="t" style="left:645.40px;top:516.12px;font-size:8.3px;color:#fff;transform:scaleX(0.8733);">view license</div>
<div class="t" style="left:685.00px;top:516.12px;font-size:8.3px;color:#8d8d8d;">]</div>
</body></html>
